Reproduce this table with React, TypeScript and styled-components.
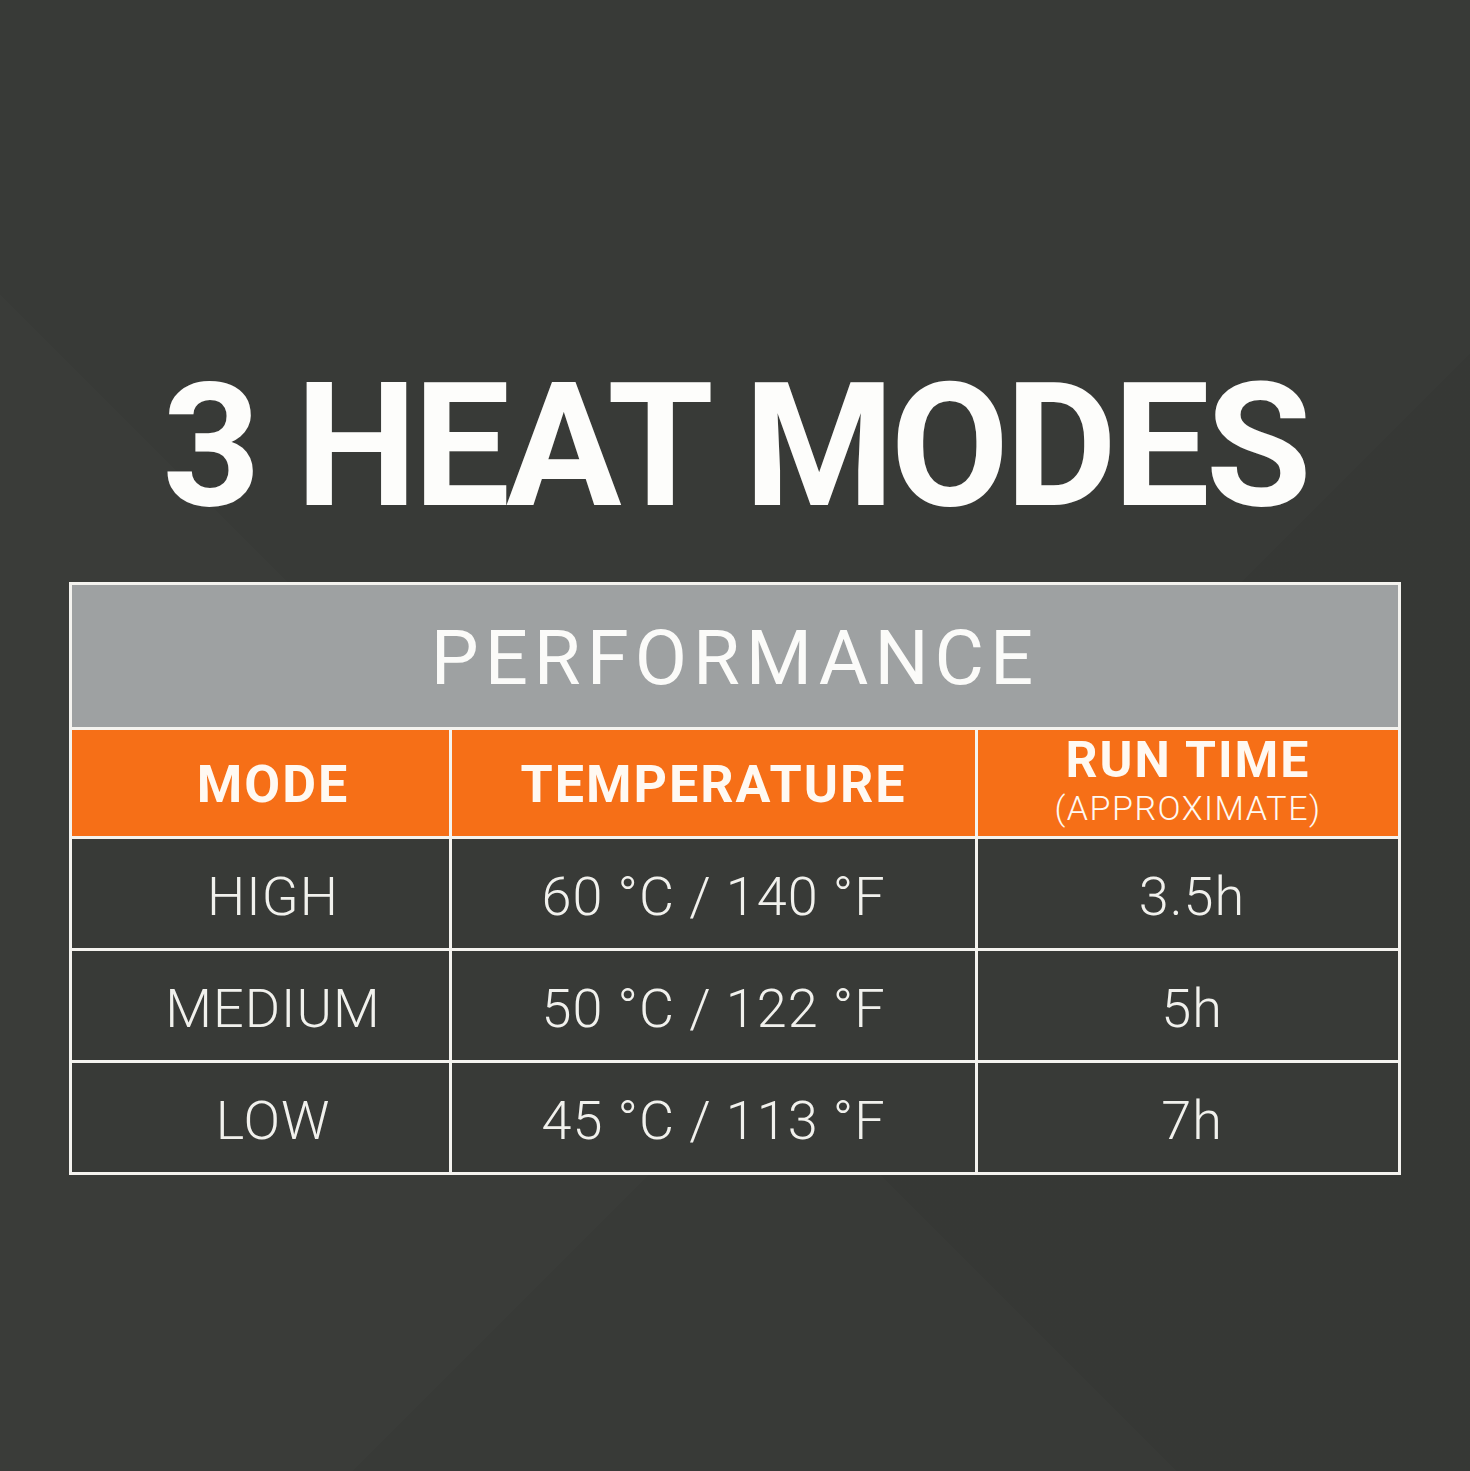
import React from "react";
import styled, { createGlobalStyle } from "styled-components";

const Global = createGlobalStyle`
  html, body { margin: 0; padding: 0; background: #383a37; }
  #root { min-height: 1471px; }
`;

const Page = styled.main`
  width: 1470px;
  height: 1471px;
  box-sizing: border-box;
  padding-top: 360px;
  display: flex;
  flex-direction: column;
  align-items: center;
  background-color: #383a37;
  background-image:
    linear-gradient(135deg, rgba(0,0,0,0) 0 62%, rgba(0,0,0,0.035) 62% 100%),
    linear-gradient(45deg, rgba(255,255,255,0.012) 0 40%, rgba(0,0,0,0) 40% 100%);
  font-family: Roboto, "Liberation Sans", sans-serif;
  overflow: hidden;
`;

const Title = styled.h1`
  margin: 0 0 50px 0;
  font-family: Roboto, "Liberation Sans", sans-serif;
  font-weight: 700;
  font-size: 172px;
  line-height: 1;
  letter-spacing: -4px;
  color: #fdfdfb;
  white-space: nowrap;
`;

const Table = styled.div`
  width: 1332px;
  box-sizing: border-box;
  display: grid;
  grid-template-columns: 377px 523px 420px;
  grid-template-rows: 142px 106px 109px 109px 109px;
  gap: 3px;
  padding: 3px;
  background: #f4f3ef;
`;

const Banner = styled.div`
  grid-column: 1 / -1;
  background: #9ea1a2;
  display: flex;
  align-items: center;
  justify-content: center;
  color: #fbfbf9;
  font-weight: 400;
  font-size: 76px;
  letter-spacing: 6px;
  padding-top: 4px;
`;

type CellProps = { $shift?: number; $stacked?: boolean };

const HeadCell = styled.div<CellProps>`
  box-sizing: border-box;
  background: #f66f17;
  display: flex;
  flex-direction: column;
  align-items: center;
  justify-content: center;
  color: #fff9f2;
  padding-top: ${(p) => (p.$stacked ? 0 : 4)}px;
  padding-bottom: ${(p) => (p.$stacked ? 6 : 0)}px;
  padding-left: ${(p) => p.$shift ?? 0}px;
  overflow: hidden;
`;

const HeadLabel = styled.span<{ $size?: number }>`
  display: block;
  font-weight: 700;
  font-size: ${(p) => p.$size ?? 52}px;
  line-height: ${(p) => (p.$size ? 1.172 : "38px")};
  letter-spacing: 2px;
  white-space: nowrap;
`;

const HeadSub = styled.span`
  display: block;
  font-weight: 300;
  font-size: 34px;
  line-height: 1.172;
  letter-spacing: 1.5px;
  white-space: nowrap;
`;

const Cell = styled.div<CellProps>`
  background: #383a37;
  display: flex;
  align-items: center;
  justify-content: center;
  color: #f1f1ed;
  font-weight: 300;
  font-size: 54px;
  letter-spacing: 1px;
  padding-top: 6px;
  padding-left: ${(p) => p.$shift ?? 0}px;
`;

const rows = [
  { mode: "HIGH", temp: "60 °C / 140 °F", time: "3.5h" },
  { mode: "MEDIUM", temp: "50 °C / 122 °F", time: "5h" },
  { mode: "LOW", temp: "45 °C / 113 °F", time: "7h" },
];

export default function App() {
  return (
    <>
      <Global />
      <Page>
        <Title>3 HEAT MODES</Title>
        <Table>
          <Banner>PERFORMANCE</Banner>
          <HeadCell $shift={25}>
            <HeadLabel>MODE</HeadLabel>
          </HeadCell>
          <HeadCell>
            <HeadLabel>TEMPERATURE</HeadLabel>
          </HeadCell>
          <HeadCell $stacked>
            <HeadLabel $size={50}>RUN TIME</HeadLabel>
            <HeadSub>(APPROXIMATE)</HeadSub>
          </HeadCell>
          {rows.map((r) => (
            <React.Fragment key={r.mode}>
              <Cell $shift={25}>{r.mode}</Cell>
              <Cell>{r.temp}</Cell>
              <Cell $shift={8}>{r.time}</Cell>
            </React.Fragment>
          ))}
        </Table>
      </Page>
    </>
  );
}
